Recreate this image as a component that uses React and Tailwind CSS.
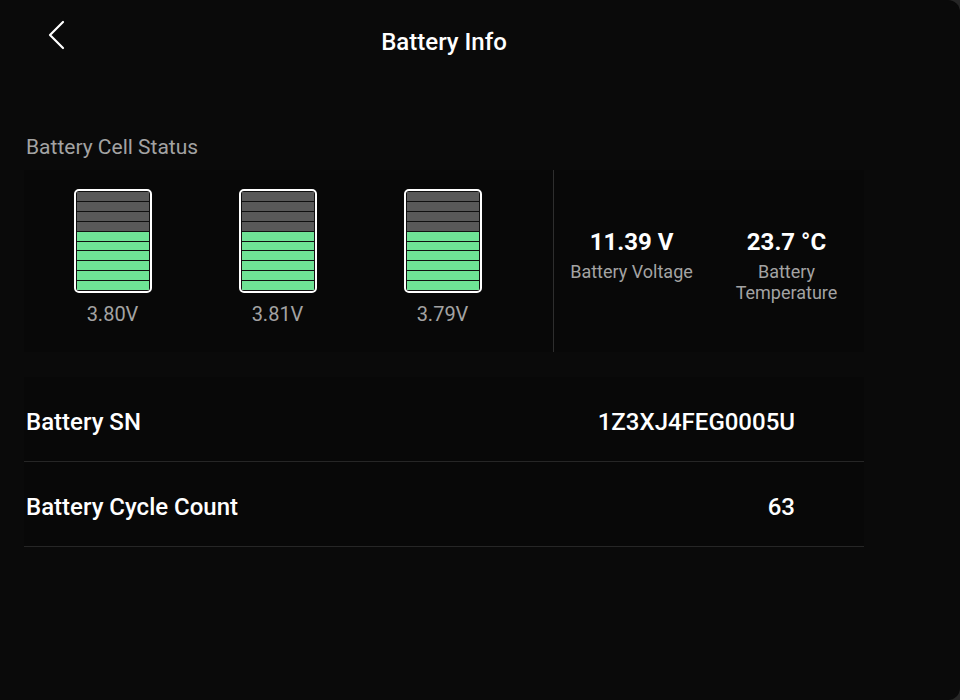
import React from 'react';

const cells = [
    { volts: '3.80V', filled: 6 },
    { volts: '3.81V', filled: 6 },
    { volts: '3.79V', filled: 6 },
];

const infoRows = [
    { label: 'Battery SN', value: '1Z3XJ4FEG0005U' },
    { label: 'Battery Cycle Count', value: '63' },
];

function BatteryCell({ filled }) {
    const segments = Array.from({ length: 10 }, (_, i) => i >= 10 - filled);
    return (
        <div className="w-[78px] h-[104px] rounded-[5px] border-2 border-white bg-[#111] p-px flex flex-col gap-px">
            {segments.map((on, i) => (
                <div key={i} className={on ? 'flex-1 bg-[#6fe396]' : 'flex-1 bg-[#595959]'} />
            ))}
        </div>
    );
}

export default function App() {
    return (
        <div className="w-[960px] h-[700px] bg-[#262626]" style={{ fontFamily: 'Roboto, "Liberation Sans", sans-serif' }}>
            <div className="w-full h-full bg-[#0a0a0a] rounded-r-[12px] flex flex-col">
                {/* Header */}
                <div className="h-[84px] w-[840px] ml-6 relative flex items-center justify-center">
                    <button className="absolute left-[22px] top-[20px] text-white">
                        <svg width="20" height="30" viewBox="0 0 20 30" fill="none" stroke="currentColor" strokeWidth="2.2" strokeLinecap="round" strokeLinejoin="round">
                            <path d="M17 2 L4 15 L17 28" />
                        </svg>
                    </button>
                    <h1 className="text-[24px] font-medium text-white">Battery Info</h1>
                </div>

                <div className="ml-6 w-[840px] flex flex-col">
                    <p className="ml-[2px] mt-[50px] text-[21px] leading-[26px] text-[#a3a3a3]">Battery Cell Status</p>

                    {/* Cell panel */}
                    <div className="mt-[10px] h-[182px] flex bg-[#080808]">
                        <div className="w-[530px] pl-[6px] pt-[19px] flex items-start">
                            {cells.map((c, i) => (
                                <div key={i} className="w-[165px] flex flex-col items-center">
                                    <BatteryCell filled={c.filled} />
                                    <span className="mt-[8px] text-[20px] leading-[26px] text-[#a3a3a3]">{c.volts}</span>
                                </div>
                            ))}
                        </div>
                        <div className="w-px bg-[#2e2e2e]" />
                        <div className="flex-1 flex items-start pt-[57px]">
                            <div className="w-[155px] flex flex-col items-center">
                                <span className="text-[24px] leading-[30px] font-bold text-white">11.39 V</span>
                                <span className="mt-[4px] text-[18px] leading-[21px] text-[#a3a3a3]">Battery Voltage</span>
                            </div>
                            <div className="w-[155px] flex flex-col items-center text-center">
                                <span className="text-[24px] leading-[30px] font-bold text-white">23.7 °C</span>
                                <span className="mt-[4px] text-[18px] leading-[21px] text-[#a3a3a3]">Battery<br />Temperature</span>
                            </div>
                        </div>
                    </div>

                    {/* Info rows */}
                    <div className="mt-[25px] flex flex-col">
                        {infoRows.map((r) => (
                            <div key={r.label} className="h-[85px] border-b border-[#262626] flex items-center justify-between pt-[6px] pl-[2px] pr-[69px] bg-[#080808]">
                                <span className="text-[24px] font-medium text-white">{r.label}</span>
                                <span className="text-[24px] font-medium text-white">{r.value}</span>
                            </div>
                        ))}
                    </div>
                </div>
            </div>
        </div>
    );
}
